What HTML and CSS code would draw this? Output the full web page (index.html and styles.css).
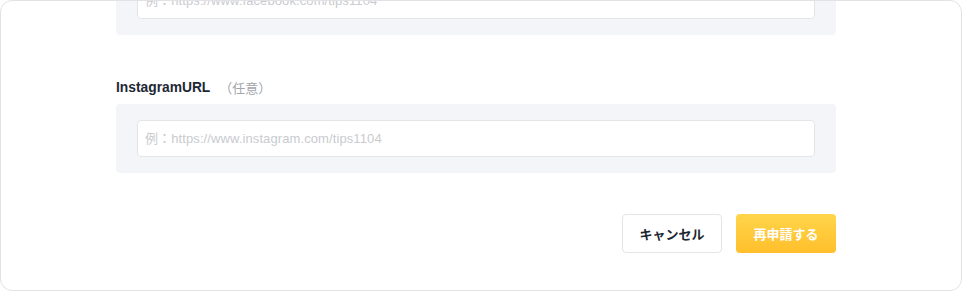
FILE: index.html
```html
<!DOCTYPE html>
<html lang="ja">
<head>
<meta charset="utf-8">
<title>再申請</title>
<link rel="stylesheet" href="styles.css">
</head>
<body>
<div class="card">
  <div class="content">
    <div class="field field-cut">
      <div class="box">
        <input class="input" type="text" placeholder="例：https://www.facebook.com/tips1104">
      </div>
    </div>
    <div class="field">
      <div class="label"><span class="label-main">InstagramURL</span><span class="label-opt">（任意）</span></div>
      <div class="box">
        <input class="input" type="text" placeholder="例：https://www.instagram.com/tips1104">
      </div>
    </div>
    <div class="actions">
      <button class="btn btn-cancel" type="button">キャンセル</button>
      <button class="btn btn-submit" type="button">再申請する</button>
    </div>
  </div>
</div>
</body>
</html>
```

FILE: styles.css
```css
* { box-sizing: border-box; }
html, body { margin: 0; padding: 0; background: #ffffff; }
body {
  font-family: "Liberation Sans", "Noto Sans CJK JP", sans-serif;
  color: #1d2733;
}
.card {
  width: 962px;
  height: 291px;
  border: 1px solid #e2e2e4;
  border-radius: 12px;
  overflow: hidden;
  background: #ffffff;
}
.content {
  width: 835px;
  padding-left: 115px;
  margin-top: -35px;
}
.field-cut { margin-bottom: 43px; }
.label {
  height: 20px;
  line-height: 20px;
  margin-bottom: 6px;
  display: flex;
  align-items: center;
}
.label-main {
  font-weight: bold;
  font-size: 13.8px;
  color: #1d2733;
}
.label-opt {
  margin-left: 9px;
  font-size: 13px;
  color: #a3a6ab;
  font-family: "Noto Sans CJK JP", sans-serif;
}
.box {
  background: #f4f5f9;
  border-radius: 4px;
  padding: 16px 21px;
}
.input {
  display: block;
  width: 100%;
  height: 37px;
  border: 1px solid #e3e5e9;
  border-radius: 4px;
  background: #ffffff;
  padding: 0 7px;
  font-family: "Liberation Sans", "Noto Sans CJK JP", sans-serif;
  font-size: 13px;
  letter-spacing: 0.1px;
  color: #333;
  outline: none;
}
.input::placeholder { color: #c9cbcf; }
.actions {
  margin-top: 41px;
  display: flex;
  justify-content: flex-end;
  gap: 14px;
}
.btn {
  width: 100px;
  height: 39px;
  border-radius: 4px;
  font-family: "Liberation Sans", "Noto Sans CJK JP", sans-serif;
  font-size: 13px;
  font-weight: bold;
  cursor: pointer;
  padding: 0;
}
.btn-cancel {
  background: #ffffff;
  border: 1px solid #e3e5e8;
  color: #1d2733;
}
.btn-submit {
  border: none;
  color: #ffffff;
  background: linear-gradient(180deg, #ffd54b 0%, #ffbf2b 100%);
}
```
